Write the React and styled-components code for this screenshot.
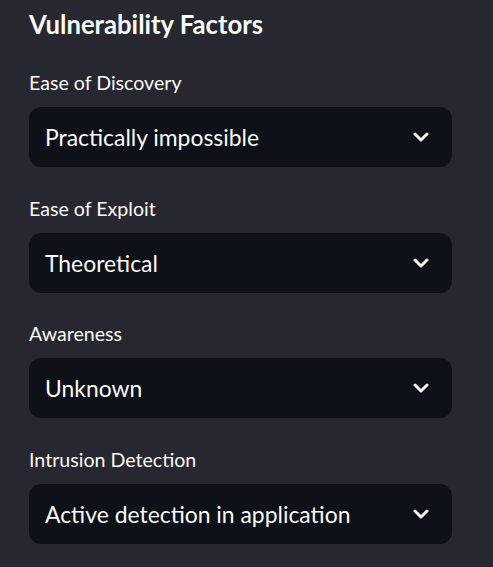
import React from 'react'
import styled, { createGlobalStyle } from 'styled-components'

const GlobalStyle = createGlobalStyle`
  html, body {
    margin: 0;
    padding: 0;
    background-color: #262730;
  }
  body {
    font-family: "Lato", "Noto Sans", sans-serif;
    color: #fafafa;
  }
`

const Sidebar = styled.div`
  width: 493px;
  min-height: 567px;
  box-sizing: border-box;
  padding: 6px 41px 0 29px;
  background-color: #262730;
  display: flex;
  flex-direction: column;
`

const Title = styled.h3`
  margin: 0 0 26px 0;
  font-size: 25.7px;
  line-height: 36px;
  font-weight: 700;
  color: #fafafa;
`

const FieldList = styled.div`
  display: flex;
  flex-direction: column;
  gap: 26.5px;
`

const Field = styled.div`
  display: flex;
  flex-direction: column;
  gap: 9px;
`

const Label = styled.label`
  font-size: 19.6px;
  line-height: 30px;
  color: #fafafa;
`

const Select = styled.div`
  height: 60px;
  box-sizing: border-box;
  border-radius: 12px;
  background-color: #0e1117;
  display: flex;
  align-items: center;
  justify-content: space-between;
  padding: 0 23px 0 16px;
  cursor: pointer;
`

const Value = styled.span`
  font-size: 22.9px;
  color: #fafafa;
`

const Chevron = () => (
  <svg width="16" height="10" viewBox="0 0 16 10" fill="none">
    <path d="M2 2 L8 8 L14 2" stroke="#fafafa" strokeWidth="3" strokeLinecap="round" strokeLinejoin="round" />
  </svg>
)

const fields = [
  { label: 'Ease of Discovery', value: 'Practically impossible' },
  { label: 'Ease of Exploit', value: 'Theoretical' },
  { label: 'Awareness', value: 'Unknown' },
  { label: 'Intrusion Detection', value: 'Active detection in application' },
]

export default function App() {
  return (
    <>
      <GlobalStyle />
      <Sidebar>
        <Title>Vulnerability Factors</Title>
        <FieldList>
          {fields.map((f) => (
            <Field key={f.label}>
              <Label>{f.label}</Label>
              <Select>
                <Value>{f.value}</Value>
                <Chevron />
              </Select>
            </Field>
          ))}
        </FieldList>
      </Sidebar>
    </>
  )
}
